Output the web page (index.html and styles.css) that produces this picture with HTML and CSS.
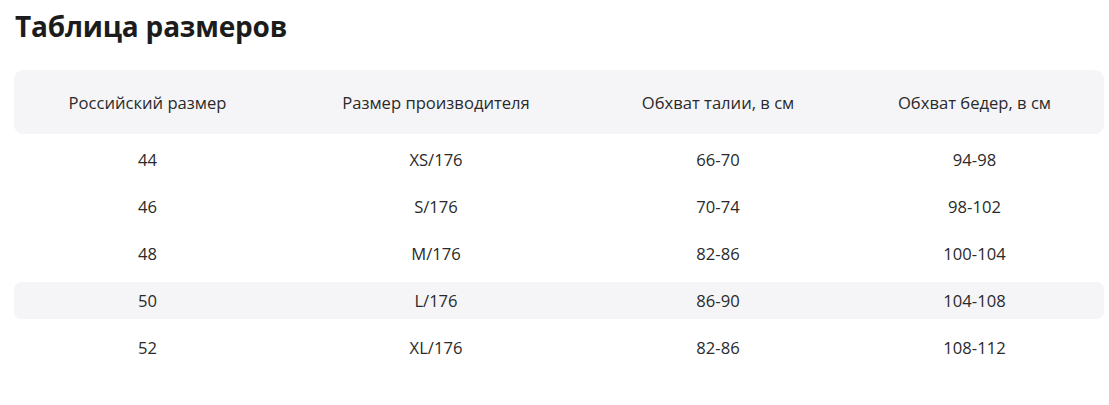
FILE: index.html
```html
<!DOCTYPE html>
<html lang="ru">
<head>
<meta charset="utf-8">
<title>Таблица размеров</title>
<link rel="stylesheet" href="styles.css">
</head>
<body>
<main class="page">
  <h1 class="title">Таблица размеров</h1>
  <div class="table">
    <div class="row head">
      <div class="cell">Российский размер</div>
      <div class="cell">Размер производителя</div>
      <div class="cell">Обхват талии, в см</div>
      <div class="cell">Обхват бедер, в см</div>
    </div>
    <div class="body">
      <div class="row">
        <div class="cell">44</div><div class="cell">XS/176</div><div class="cell">66-70</div><div class="cell">94-98</div>
      </div>
      <div class="row">
        <div class="cell">46</div><div class="cell">S/176</div><div class="cell">70-74</div><div class="cell">98-102</div>
      </div>
      <div class="row">
        <div class="cell">48</div><div class="cell">M/176</div><div class="cell">82-86</div><div class="cell">100-104</div>
      </div>
      <div class="row alt">
        <div class="cell">50</div><div class="cell">L/176</div><div class="cell">86-90</div><div class="cell">104-108</div>
      </div>
      <div class="row">
        <div class="cell">52</div><div class="cell">XL/176</div><div class="cell">82-86</div><div class="cell">108-112</div>
      </div>
    </div>
  </div>
</main>
</body>
</html>
```

FILE: styles.css
```css
html, body {
  margin: 0;
  padding: 0;
  background: #ffffff;
}

.page {
  padding: 6px 5px 0 14px;
  font-family: "Open Sans", "Noto Sans", sans-serif;
  color: #2a2a2a;
}

.title {
  margin: 0 0 24px 1px;
  font-size: 28px;
  line-height: 40px;
  font-weight: 700;
  color: #1c1c1c;
  letter-spacing: -0.2px;
}

.table {
  width: 1090px;
}

.row {
  display: grid;
  grid-template-columns: 267fr 310fr 254fr 259fr;
  align-items: center;
  font-size: 16.6px;
}

.cell {
  text-align: center;
}

.head {
  height: 64px;
  background: #f5f5f8;
  border-radius: 9px;
}

.body {
  display: flex;
  flex-direction: column;
  gap: 10px;
  padding-top: 7px;
}

.body .row {
  height: 37px;
}

.alt {
  background: #f5f5f8;
  border-radius: 7px;
}
```
